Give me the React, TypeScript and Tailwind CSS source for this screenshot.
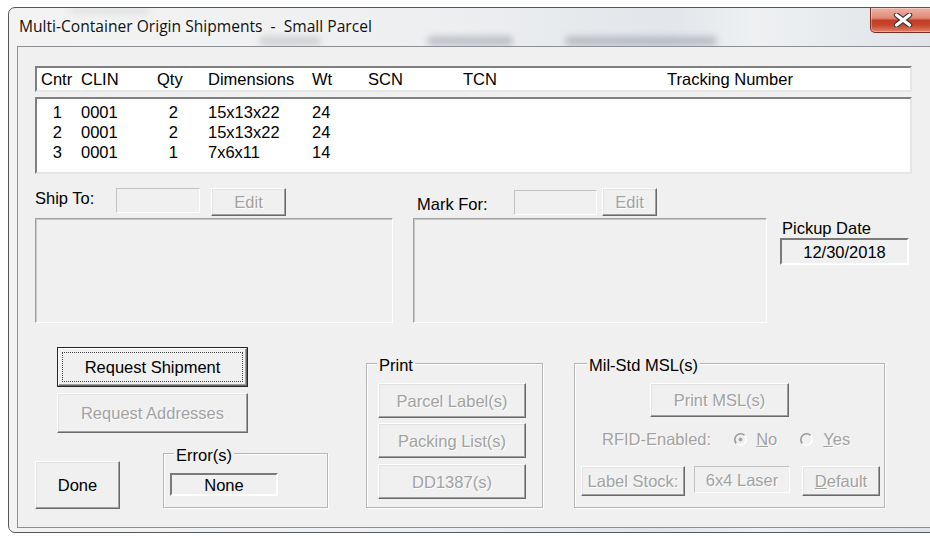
import React from 'react';

type Kids = { className?: string; children?: React.ReactNode };

const columns = [
  { key: 'cntr', label: 'Cntr', w: 'w-[44px] pl-[4px]', cell: 'w-[44px] text-right pr-[19px]' },
  { key: 'clin', label: 'CLIN', w: 'w-[76px]', cell: 'w-[76px]' },
  { key: 'qty', label: 'Qty', w: 'w-[51px]', cell: 'w-[51px] text-right pr-[30px]' },
  { key: 'dim', label: 'Dimensions', w: 'w-[104px]', cell: 'w-[104px]' },
  { key: 'wt', label: 'Wt', w: 'w-[56px]', cell: 'w-[56px]' },
  { key: 'scn', label: 'SCN', w: 'w-[95px]', cell: 'w-[95px]' },
  { key: 'tcn', label: 'TCN', w: 'w-[204px]', cell: 'w-[204px]' },
  { key: 'track', label: 'Tracking Number', w: 'flex-1', cell: 'flex-1' },
];

const containers = [
  { cntr: '1', clin: '0001', qty: '2', dim: '15x13x22', wt: '24', scn: '', tcn: '', track: '' },
  { cntr: '2', clin: '0001', qty: '2', dim: '15x13x22', wt: '24', scn: '', tcn: '', track: '' },
  { cntr: '3', clin: '0001', qty: '1', dim: '7x6x11', wt: '14', scn: '', tcn: '', track: '' },
];

// 3D push button, classic look
function PushButton({ className = '', disabled = false, children }: Kids & { disabled?: boolean }) {
  return (
    <div
      className={`flex shrink-0 items-center justify-center bg-[#f0f0f0] border border-t-white border-l-white border-r-[#696969] border-b-[#696969] shadow-[inset_-1px_-1px_0_#a0a0a0,inset_1px_1px_0_#e3e3e3] ${
        disabled ? 'text-[#a2a2a2] [text-shadow:1px_1px_0_#ffffff]' : 'text-black'
      } ${className}`}
    >
      {children}
    </div>
  );
}

// default button: black frame + focus rectangle
function DefaultButton({ className = '', children }: Kids) {
  return (
    <div className={`flex shrink-0 border border-[#262626] ${className}`}>
      <div className="flex flex-1 bg-[#f0f0f0] border border-t-white border-l-white border-r-[#696969] border-b-[#696969] shadow-[inset_-1px_-1px_0_#a0a0a0]">
        <div className="m-[3px] flex flex-1 items-center justify-center border border-dotted border-[#404040]">
          {children}
        </div>
      </div>
    </div>
  );
}

function GroupBox({ label, className = '', labelClass = '', children }: Kids & { label: string; labelClass?: string }) {
  return (
    <div className={`shrink-0 border border-[#b5b5b5] shadow-[inset_1px_1px_0_#ffffff,1px_1px_0_#ffffff] ${className}`}>
      <div className={`-mt-[9px] w-fit bg-[#f0f0f0] px-[2px] leading-[20px] ${labelClass}`}>{label}</div>
      {children}
    </div>
  );
}

function Radio({ checked = false }: { checked?: boolean }) {
  return (
    <svg width="13" height="13" viewBox="0 0 13 13" className="shrink-0">
      <circle cx="6.5" cy="6.5" r="5.8" fill="#f0f0f0" />
      <path d="M10.6 2.4 A5.8 5.8 0 0 0 2.4 10.6" fill="none" stroke="#9a9a9a" strokeWidth="1.6" />
      <path d="M2.4 10.6 A5.8 5.8 0 0 0 10.6 2.4" fill="none" stroke="#ffffff" strokeWidth="1.4" />
      {checked && <circle cx="6.5" cy="6.5" r="2" fill="#a8a8a8" />}
    </svg>
  );
}

export default function App() {
  return (
    <div className="w-[930px] h-[536px] overflow-hidden bg-white pt-[7px] pl-[8px] font-['Liberation_Sans',Arial,sans-serif] text-[16.5px] leading-[20px] text-black">
      <div className="flex h-[526px] w-[937px] flex-col overflow-hidden rounded-t-[7px] rounded-bl-[7px] border border-[#55585c] bg-[linear-gradient(to_right,#f3f3f3_0%,#eeeff1_45%,#e2e6ea_70%,#eef0f2_80%,#dfe3e7_100%)]">
        {/* title bar, glass shows blurred shapes behind it */}
        <div className="relative flex h-[38px] shrink-0 items-start overflow-hidden">
          <div className="pointer-events-none absolute inset-0 blur-[3px]">
            <div className="absolute left-[250px] top-[28px] h-[10px] w-[62px] rounded-full bg-[#8d9299] opacity-30" />
            <div className="absolute left-[418px] top-[28px] h-[10px] w-[86px] rounded-full bg-[#7d838b] opacity-40" />
            <div className="absolute left-[556px] top-[28px] h-[10px] w-[152px] rounded-full bg-[#7d838b] opacity-40" />
            <div className="absolute left-[60px] top-[0px] h-[6px] w-[80px] rounded-full bg-[#9aa0a6] opacity-20" />
          </div>
          <span className="relative mt-[8px] ml-[10px] whitespace-pre font-['Open_Sans',sans-serif] text-[15.6px] leading-[20px] text-[#111] [text-shadow:0_0_6px_#ffffff]">
            Multi-Container Origin Shipments  -  Small Parcel
          </span>
          <div className="relative ml-auto mr-[8px] flex h-[25px] w-[66px] items-center justify-center rounded-b-[5px] border border-t-0 border-[#7a2d22] bg-[linear-gradient(to_bottom,#eeb1a3_0%,#df8a77_42%,#c43c25_52%,#c8462e_72%,#e2826a_100%)] shadow-[inset_0_0_0_1px_rgba(255,255,255,0.35)]">
            <svg width="20" height="14" viewBox="0 0 20 14">
              <path d="M3.5 2 L16.5 12 M16.5 2 L3.5 12" stroke="#3a3a3a" strokeWidth="5.4" strokeLinecap="round" />
              <path d="M3.5 2 L16.5 12 M16.5 2 L3.5 12" stroke="#ffffff" strokeWidth="3.2" strokeLinecap="round" />
            </svg>
          </div>
        </div>

        {/* client area */}
        <div className="ml-[8px] h-[482px] shrink-0 border border-[#8c8f93] bg-[#f0f0f0] pl-[17px] pt-[19px]">
          {/* container list */}
          <div className="w-[877px]">
            <div className="flex h-[26px] items-center border-2 border-t-[#808080] border-l-[#808080] border-b-[#e6e6e6] border-r-[#e6e6e6] bg-white">
              {columns.map((c) => (
                <div key={c.key} className={c.w}>
                  {c.label}
                </div>
              ))}
            </div>
            <div className="mt-[5px] h-[77px] border-2 border-t-[#808080] border-l-[#808080] border-b-[#e6e6e6] border-r-[#e6e6e6] bg-white pt-[3px]">
              {containers.map((row) => (
                <div key={row.cntr} className="flex h-[20px] items-center">
                  {columns.map((c) => (
                    <div key={c.key} className={c.cell}>
                      {row[c.key as keyof typeof row]}
                    </div>
                  ))}
                </div>
              ))}
            </div>
          </div>

          {/* addresses + pickup */}
          <div className="mt-[14px] flex items-start">
            <div className="w-[358px] shrink-0">
              <div className="flex h-[28px] items-start">
                <div className="w-[81px] shrink-0">Ship To:</div>
                <div className="h-[25px] w-[84px] shrink-0 border border-t-[#c2c2c2] border-l-[#c2c2c2] border-b-white border-r-white" />
                <PushButton disabled className="ml-[11px] h-[28px] w-[75px]">
                  Edit
                </PushButton>
              </div>
              <div className="mt-[2px] h-[105px] border border-t-[#a0a0a0] border-l-[#a0a0a0] border-b-white border-r-white shadow-[inset_1px_1px_0_#c8c8c8]" />
            </div>

            <div className="ml-[20px] w-[354px] shrink-0">
              <div className="flex h-[28px] items-start">
                <div className="mt-[6px] w-[101px] shrink-0 pl-[4px]">Mark For:</div>
                <div className="mt-[2px] h-[25px] w-[83px] shrink-0 border border-t-[#c2c2c2] border-l-[#c2c2c2] border-b-white border-r-white" />
                <PushButton disabled className="ml-[5px] h-[28px] w-[55px]">
                  Edit
                </PushButton>
              </div>
              <div className="mt-[2px] h-[105px] border border-t-[#a0a0a0] border-l-[#a0a0a0] border-b-white border-r-white shadow-[inset_1px_1px_0_#c8c8c8]" />
            </div>

            <div className="ml-[13px] mt-[30px] shrink-0">
              <div className="pl-[2px]">Pickup Date</div>
              <div className="flex h-[27px] w-[129px] items-center justify-center border-2 border-t-[#7a7a7a] border-l-[#7a7a7a] border-b-white border-r-white">
                12/30/2018
              </div>
            </div>
          </div>

          {/* actions */}
          <div className="mt-[24px] flex items-start">
            <div className="w-[293px] shrink-0">
              <DefaultButton className="ml-[22px] h-[40px] w-[191px]">Request Shipment</DefaultButton>
              <PushButton disabled className="ml-[22px] mt-[6px] h-[40px] w-[191px]">
                Request Addresses
              </PushButton>
              <div className="flex items-start">
                <PushButton className="mt-[28px] h-[48px] w-[85px]">Done</PushButton>
                <GroupBox label="Error(s)" className="ml-[43px] mt-[20px] h-[55px] w-[165px]" labelClass="ml-[10px] -mt-[7px]">
                  <div className="ml-[6px] mt-[8px] flex h-[23px] w-[108px] items-center justify-center border-2 border-t-[#7a7a7a] border-l-[#7a7a7a] border-b-white border-r-white">
                    None
                  </div>
                </GroupBox>
              </div>
            </div>

            <GroupBox label="Print" className="ml-[38px] mt-[16px] h-[145px] w-[177px]" labelClass="ml-[10px]">
              <div className="ml-[11px] mt-[8px] flex flex-col">
                <PushButton disabled className="h-[35px] w-[148px]">
                  Parcel Label(s)
                </PushButton>
                <PushButton disabled className="mt-[5px] h-[35px] w-[148px]">
                  Packing List(s)
                </PushButton>
                <PushButton disabled className="mt-[6px] h-[35px] w-[148px]">
                  DD1387(s)
                </PushButton>
              </div>
            </GroupBox>

            <GroupBox label="Mil-Std MSL(s)" className="ml-[31px] mt-[16px] h-[145px] w-[311px]" labelClass="ml-[12px]">
              <PushButton disabled className="ml-[75px] mt-[8px] h-[34px] w-[139px]">
                Print MSL(s)
              </PushButton>
              <div className="ml-[27px] mt-[12px] flex h-[20px] items-center text-[#a2a2a2] [text-shadow:1px_1px_0_#ffffff]">
                <span>RFID-Enabled:</span>
                <span className="ml-[23px]">
                  <Radio checked />
                </span>
                <span className="ml-[9px]">
                  <span className="underline">N</span>o
                </span>
                <span className="ml-[23px]">
                  <Radio />
                </span>
                <span className="ml-[10px]">
                  <span className="underline">Y</span>es
                </span>
              </div>
              <div className="ml-[6px] mt-[17px] flex items-start">
                <PushButton disabled className="h-[30px] w-[104px]">
                  Label Stock:
                </PushButton>
                <div className="ml-[9px] flex h-[27px] w-[96px] items-center justify-center border border-t-[#c2c2c2] border-l-[#c2c2c2] border-b-white border-r-white text-[#a2a2a2] [text-shadow:1px_1px_0_#ffffff]">
                  6x4 Laser
                </div>
                <PushButton disabled className="ml-[12px] h-[30px] w-[78px]">
                  <span className="underline">D</span>efault
                </PushButton>
              </div>
            </GroupBox>
          </div>
        </div>
      </div>
    </div>
  );
}
